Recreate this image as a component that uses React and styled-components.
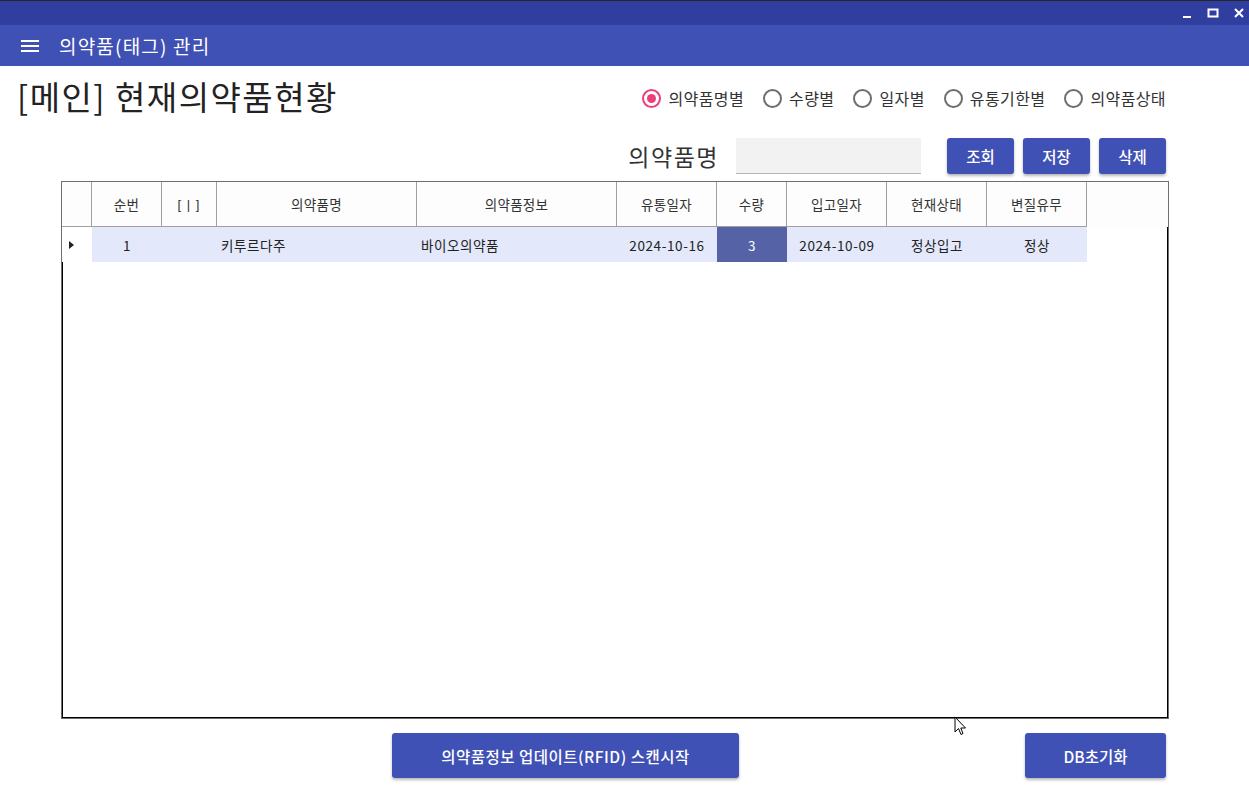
import React from "react";
import styled, { createGlobalStyle } from "styled-components";

const GlobalStyle = createGlobalStyle`
  html, body {
    margin: 0;
    padding: 0;
    background: #ffffff;
  }
  body {
    font-family: "Noto Sans CJK KR", "Noto Sans", sans-serif;
    color: #222;
  }
  * { box-sizing: border-box; }
`;

const Window = styled.div`
  width: 1249px;
  height: 788px;
  position: relative;
  overflow: hidden;
  background: #fff;
  display: flex;
  flex-direction: column;
`;

const TitleBar = styled.div`
  height: 25px;
  background: #303f9f;
  border-top: 1px solid #262626;
  display: flex;
  justify-content: flex-end;
  align-items: center;
  padding-right: 4px;
  gap: 14px;
`;

const WinButton = styled.div`
  width: 12px;
  height: 12px;
  display: flex;
  align-items: center;
  justify-content: center;
`;

const AppBar = styled.div`
  height: 41px;
  background: #3f51b5;
  display: flex;
  align-items: center;
  padding-left: 21px;
  gap: 20px;
  color: #fff;
`;

const AppTitle = styled.div`
  font-size: 19px;
  color: #fff;
  line-height: 1;
  margin-top: -1px;
  letter-spacing: 1.2px;
`;

const Main = styled.div`
  flex: 1;
  display: flex;
  flex-direction: column;
  padding: 0 83px 0 17px;
`;

const HeadRow = styled.div`
  margin-top: 12px;
  height: 40px;
  display: flex;
  align-items: center;
  justify-content: space-between;
`;

const Heading = styled.h1`
  margin: 0;
  font-size: 33px;
  font-weight: 400;
  color: #222;
  line-height: 1;
  letter-spacing: 1.5px;
  margin-top: -3px;
`;

const RadioGroup = styled.div`
  display: flex;
  align-items: center;
  gap: 19px;
`;

const RadioItem = styled.label`
  display: flex;
  align-items: center;
  gap: 7px;
  font-size: 16px;
  color: #333;
  letter-spacing: 0.4px;
`;

const RadioCircle = styled.span`
  width: 19px;
  height: 19px;
  border-radius: 50%;
  border: 2px solid ${(p) => (p.$on ? "#ec407a" : "#6e6e6e")};
  display: flex;
  align-items: center;
  justify-content: center;
  &::after {
    content: "";
    width: 9px;
    height: 9px;
    border-radius: 50%;
    background: ${(p) => (p.$on ? "#ec407a" : "transparent")};
  }
`;

const SearchRow = styled.div`
  margin-top: 20px;
  height: 36px;
  display: flex;
  align-items: center;
  justify-content: flex-end;
`;

const SearchLabel = styled.span`
  font-size: 23px;
  color: #333;
  margin-right: 17px;
  letter-spacing: 1.5px;
`;

const SearchInput = styled.div`
  width: 185px;
  height: 36px;
  background: #f2f2f2;
  border-bottom: 1px solid #b5b5b5;
  margin-right: 26px;
`;

const ButtonGroup = styled.div`
  display: flex;
  gap: 9px;
`;

const Button = styled.button`
  width: ${(p) => p.$w}px;
  height: ${(p) => p.$h || 36}px;
  border: none;
  border-radius: 3px;
  background: #3f51b5;
  color: #fff;
  font-family: "Noto Sans CJK KR", "Noto Sans", sans-serif;
  font-size: 15.5px;
  font-weight: 500;
  box-shadow: 0 2px 3px rgba(0, 0, 0, 0.28);
  padding: 0;
  cursor: pointer;
  letter-spacing: ${(p) => p.$ls || "0"};
`;

const Grid = styled.div`
  margin: 7px 0 0 44px;
  width: 1108px;
  height: 538px;
  border: 1px solid #6e6e6e;
  display: flex;
  flex-direction: column;
`;

const COLS = "30px 70px 55px 200px 200px 100px 70px 100px 100px 100px 1fr";

const HeaderRow = styled.div`
  display: grid;
  grid-template-columns: ${COLS};
  height: 45px;
  background: #fdfdfd;
`;

const HeaderCell = styled.div`
  display: flex;
  align-items: center;
  justify-content: center;
  font-size: 13.5px;
  color: #333;
  border-right: ${(p) => (p.$filler ? "none" : "1px solid #a0a0a0")};
  border-bottom: ${(p) => (p.$filler ? "none" : "1px solid #a0a0a0")};
  letter-spacing: 0.3px;
  white-space: pre;
`;

const Bracket = styled.span`
  font-family: "Liberation Sans", "DejaVu Sans", sans-serif;
  font-size: 13px;
  color: #333;
  letter-spacing: 1px;
`;

const Body = styled.div`
  flex: 1;
  border: 1px solid #000;
  border-top: none;
  background: #fff;
`;

const DataRow = styled.div`
  display: grid;
  grid-template-columns: ${COLS};
  height: 35px;
  margin-left: -1px;
`;

const DataCell = styled.div`
  display: flex;
  align-items: center;
  justify-content: ${(p) => (p.$left ? "flex-start" : "center")};
  padding-left: ${(p) => (p.$left ? "4px" : "0")};
  font-size: 13.5px;
  color: ${(p) => (p.$sel ? "#fff" : "#222")};
  background: ${(p) =>
    p.$sel ? "#5563a6" : p.$plain ? "#fff" : "#e4e8fb"};
  letter-spacing: 0.6px;
`;

const MarkerCell = styled.div`
  display: flex;
  align-items: center;
  padding-left: 7px;
  background: #fff;
`;

const RowMarker = styled.span`
  width: 0;
  height: 0;
  border-top: 4px solid transparent;
  border-bottom: 4px solid transparent;
  border-left: 5px solid #222;
`;

const BottomRow = styled.div`
  margin-top: 14px;
  display: flex;
  align-items: center;
`;

const Pointer = styled.svg`
  position: absolute;
  left: 954px;
  top: 716px;
`;

const radios = ["의약품명별", "수량별", "일자별", "유통기한별", "의약품상태"];
const headers = ["", "순번", null, "의약품명", "의약품정보", "유통일자", "수량", "입고일자", "현재상태", "변질유무"];

export default function App() {
  return (
    <Window>
      <GlobalStyle />
      <TitleBar>
        <WinButton>
          <svg width="10" height="12" viewBox="0 0 10 12">
            <rect x="1" y="9" width="8" height="2" fill="#fff" />
          </svg>
        </WinButton>
        <WinButton>
          <svg width="12" height="12" viewBox="0 0 12 12">
            <rect x="1.5" y="2.5" width="9" height="7" fill="none" stroke="#fff" strokeWidth="2" />
          </svg>
        </WinButton>
        <WinButton>
          <svg width="12" height="12" viewBox="0 0 12 12">
            <path d="M2 2 L10 10 M10 2 L2 10" stroke="#fff" strokeWidth="2" />
          </svg>
        </WinButton>
      </TitleBar>
      <AppBar>
        <svg width="18" height="14" viewBox="0 0 18 14">
          <rect x="0" y="1" width="18" height="2" fill="#fff" />
          <rect x="0" y="6" width="18" height="2" fill="#fff" />
          <rect x="0" y="11" width="18" height="2" fill="#fff" />
        </svg>
        <AppTitle>의약품(태그) 관리</AppTitle>
      </AppBar>
      <Main>
        <HeadRow>
          <Heading>[메인] 현재의약품현황</Heading>
          <RadioGroup>
            {radios.map((r, i) => (
              <RadioItem key={r}>
                <RadioCircle $on={i === 0} />
                {r}
              </RadioItem>
            ))}
          </RadioGroup>
        </HeadRow>
        <SearchRow>
          <SearchLabel>의약품명</SearchLabel>
          <SearchInput />
          <ButtonGroup>
            <Button $w={67}>조회</Button>
            <Button $w={67}>저장</Button>
            <Button $w={67}>삭제</Button>
          </ButtonGroup>
        </SearchRow>
        <Grid>
          <HeaderRow>
            {headers.map((h, i) => (
              <HeaderCell key={i}>
                {h === null ? <Bracket>[ | ]</Bracket> : h}
              </HeaderCell>
            ))}
            <HeaderCell $filler />
          </HeaderRow>
          <Body>
            <DataRow>
              <MarkerCell>
                <RowMarker />
              </MarkerCell>
              <DataCell>1</DataCell>
              <DataCell />
              <DataCell $left>키투르다주</DataCell>
              <DataCell $left>바이오의약품</DataCell>
              <DataCell>2024-10-16</DataCell>
              <DataCell $sel>3</DataCell>
              <DataCell>2024-10-09</DataCell>
              <DataCell>정상입고</DataCell>
              <DataCell>정상</DataCell>
              <DataCell $plain />
            </DataRow>
          </Body>
        </Grid>
        <BottomRow>
          <Button $w={347} $h={45} $ls="0.5px" style={{ marginLeft: 375 }}>
            의약품정보 업데이트(RFID) 스캔시작
          </Button>
          <Button $w={141} $h={45} style={{ marginLeft: 286 }}>
            DB초기화
          </Button>
        </BottomRow>
      </Main>
      <Pointer width="14" height="22" viewBox="0 0 14 22">
        <path d="M1 1 L1 16 L4.5 12.5 L7 18.5 L9 17.5 L6.8 12 L11.5 12 Z" fill="#fff" stroke="#000" strokeWidth="1" strokeLinejoin="round" />
      </Pointer>
    </Window>
  );
}
